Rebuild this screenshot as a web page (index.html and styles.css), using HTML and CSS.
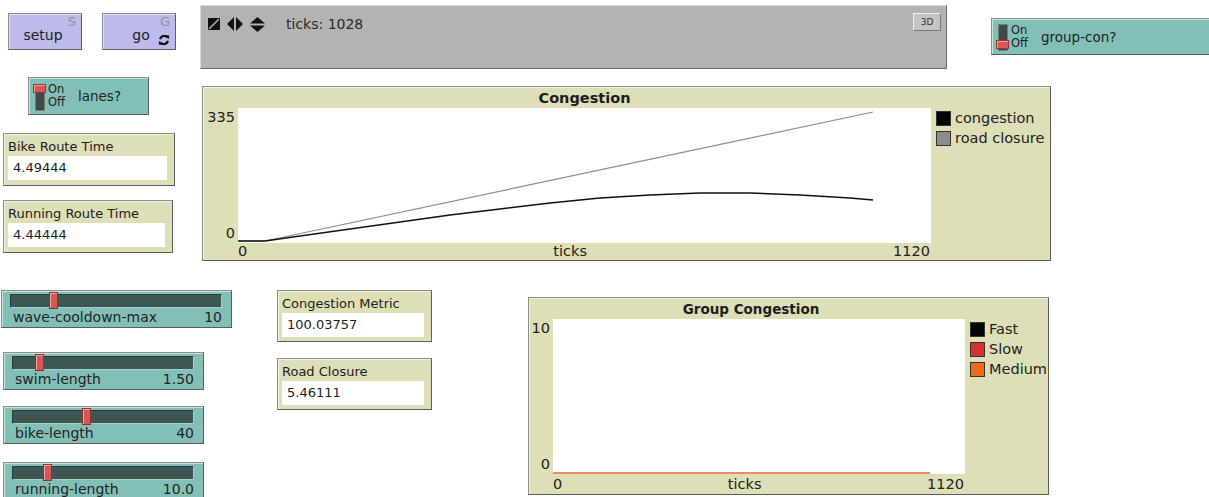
FILE: index.html
```html
<!DOCTYPE html>
<html lang="en">
<head>
<meta charset="utf-8">
<title>Interface</title>
<link rel="stylesheet" href="styles.css">
</head>
<body>
<main class="interface">

  <button class="widget nl-button btn-setup">
    <span class="btn-label">setup</span>
    <span class="hotkey">S</span>
  </button>

  <button class="widget nl-button btn-go">
    <span class="btn-label">go</span>
    <span class="hotkey">G</span>
    <svg class="forever" viewBox="0 0 12 12" width="12" height="12" aria-hidden="true">
      <path d="M2.2 5.2 A4 4 0 0 1 9.4 3.6" fill="none" stroke="#111" stroke-width="2.2"/>
      <path d="M7.6 1.2 L11.4 1.4 L10.6 5.2 Z" fill="#111"/>
      <path d="M9.8 6.8 A4 4 0 0 1 2.6 8.4" fill="none" stroke="#111" stroke-width="2.2"/>
      <path d="M4.4 10.8 L0.6 10.6 L1.4 6.8 Z" fill="#111"/>
    </svg>
  </button>

  <section class="widget view">
    <div class="view-bar">
      <svg class="view-icon" viewBox="0 0 12 12" width="12" height="12" aria-hidden="true">
        <rect x="0" y="0" width="12" height="12" fill="#111"/>
        <path d="M11 1 L1 11" stroke="#b3b3b3" stroke-width="1.4"/>
      </svg>
      <svg class="view-icon" viewBox="0 0 16 14" width="16" height="14" aria-hidden="true">
        <path d="M7 0 L0 7 L7 14 Z" fill="#111"/>
        <path d="M9 0 L16 7 L9 14 Z" fill="#111"/>
      </svg>
      <svg class="view-icon" viewBox="0 0 15 15" width="15" height="15" aria-hidden="true">
        <path d="M7.5 0 L15 6.5 L0 6.5 Z" fill="#111"/>
        <path d="M0 8.5 L15 8.5 L7.5 15 Z" fill="#111"/>
      </svg>
      <span class="tick-count">ticks: 1028</span>
    </div>
    <button class="btn-3d">3D</button>
  </section>

  <div class="widget switch sw-group is-off">
    <span class="toggle"><span class="knob"></span></span>
    <span class="onoff"><span>On</span><span>Off</span></span>
    <span class="switch-label">group-con?</span>
  </div>

  <div class="widget switch sw-lanes is-on">
    <span class="toggle"><span class="knob"></span></span>
    <span class="onoff"><span>On</span><span>Off</span></span>
    <span class="switch-label">lanes?</span>
  </div>

  <div class="widget monitor mon-bike">
    <span class="monitor-label">Bike Route Time</span>
    <span class="monitor-value">4.49444</span>
  </div>

  <div class="widget monitor mon-run">
    <span class="monitor-label">Running Route Time</span>
    <span class="monitor-value">4.44444</span>
  </div>

  <section class="widget plot plot-cong">
    <h2 class="plot-title">Congestion</h2>
    <div class="y-axis"><span>335</span><span>0</span></div>
    <div class="plot-area">
      <svg class="pens" viewBox="0 0 693 135" preserveAspectRatio="none" aria-hidden="true">
        <polyline fill="none" stroke="#8d8d8d" stroke-width="1.2"
          points="0,133 27,133 635,4"/>
        <polyline fill="none" stroke="#111" stroke-width="1.5"
          points="0,133 27,133 62,128 112,121 162,114 212,107 262,101 312,95 362,90 412,87 462,85 512,85 562,87 612,90 635,92"/>
      </svg>
    </div>
    <ul class="legend">
      <li><span class="swatch sw-black"></span>congestion</li>
      <li><span class="swatch sw-gray"></span>road closure</li>
    </ul>
    <div class="x-axis"><span>0</span><span class="x-name">ticks</span><span>1120</span></div>
  </section>

  <div class="widget slider sl-wave">
    <div class="track"><span class="handle" style="left: 38px"></span></div>
    <div class="slider-text"><span>wave-cooldown-max</span><span>10</span></div>
  </div>

  <div class="widget slider sl-swim">
    <div class="track"><span class="handle" style="left: 22px"></span></div>
    <div class="slider-text"><span>swim-length</span><span>1.50</span></div>
  </div>

  <div class="widget slider sl-bike">
    <div class="track"><span class="handle" style="left: 69px"></span></div>
    <div class="slider-text"><span>bike-length</span><span>40</span></div>
  </div>

  <div class="widget slider sl-run">
    <div class="track"><span class="handle" style="left: 30px"></span></div>
    <div class="slider-text"><span>running-length</span><span>10.0</span></div>
  </div>

  <div class="widget monitor mon-cong">
    <span class="monitor-label">Congestion Metric</span>
    <span class="monitor-value">100.03757</span>
  </div>

  <div class="widget monitor mon-road">
    <span class="monitor-label">Road Closure</span>
    <span class="monitor-value">5.46111</span>
  </div>

  <section class="widget plot plot-group">
    <h2 class="plot-title">Group Congestion</h2>
    <div class="y-axis"><span>10</span><span>0</span></div>
    <div class="plot-area">
      <svg class="pens" viewBox="0 0 412 155" preserveAspectRatio="none" aria-hidden="true">
        <polyline fill="none" stroke="#e8653a" stroke-width="1.6" points="0,154 377,154"/>
      </svg>
    </div>
    <ul class="legend">
      <li><span class="swatch sw-black"></span>Fast</li>
      <li><span class="swatch sw-red"></span>Slow</li>
      <li><span class="swatch sw-orange"></span>Medium</li>
    </ul>
    <div class="x-axis"><span>0</span><span class="x-name">ticks</span><span>1120</span></div>
  </section>

</main>
</body>
</html>
```

FILE: styles.css
```css
* { box-sizing: border-box; }

html, body {
  margin: 0;
  padding: 0;
  background: #ffffff;
  overflow: hidden;
}

body {
  font-family: "DejaVu Sans", "Liberation Sans", sans-serif;
  color: #1d1d1d;
}

/* The interface tab is a free canvas: every widget keeps the spot the model author gave it. */
.interface {
  position: relative;
  width: 1209px;
  height: 497px;
  overflow: hidden;
}

.widget {
  position: absolute;
  border: 1px solid #8c8c8c;
  border-right-color: #5d5d5d;
  border-bottom-color: #5d5d5d;
  box-shadow: inset 1px 1px 0 rgba(255, 255, 255, 0.55);
}

/* ---------- buttons ---------- */
.nl-button {
  background: #bcbbe9;
  font: inherit;
  color: #1d1d1d;
  padding: 0;
  margin: 0;
  display: flex;
  align-items: center;
  justify-content: center;
  cursor: pointer;
}

.btn-label {
  font-size: 14px;
  padding-top: 6px;
}

.hotkey {
  position: absolute;
  top: 0;
  right: 5px;
  font-size: 13px;
  color: #8e8eb0;
}

.btn-setup { left: 8px; top: 13px; width: 74px; height: 37px; }
.btn-setup .btn-label { margin-left: -4px; }

.btn-go { left: 102px; top: 13px; width: 74px; height: 37px; }
.btn-go .btn-label { margin-left: 4px; }

.forever {
  position: absolute;
  right: 5px;
  bottom: 3px;
}

/* ---------- world view ---------- */
.view {
  left: 200px;
  top: 5px;
  width: 747px;
  height: 64px;
  background: #b3b3b3;
  border-color: #d8d8d8 #6a6a6a #6a6a6a #d8d8d8;
  box-shadow: none;
}

.view-bar {
  display: flex;
  align-items: center;
  gap: 7px;
  padding: 10px 0 0 7px;
}

.view-icon { display: block; }

.tick-count {
  font-size: 14px;
  margin-left: 14px;
  color: #2a2a2a;
}

.btn-3d {
  position: absolute;
  top: 7px;
  right: 5px;
  width: 28px;
  height: 18px;
  padding: 0;
  font-family: "DejaVu Sans", sans-serif;
  font-size: 9px;
  color: #333;
  background: #c4c4c4;
  border: 1px solid #8a8a8a;
  border-color: #f0f0f0 #7a7a7a #7a7a7a #f0f0f0;
}

/* ---------- switches ---------- */
.switch {
  background: #82c0b7;
  display: flex;
  align-items: center;
}

.sw-lanes { left: 28px; top: 77px; width: 121px; height: 38px; }
.sw-group { left: 991px; top: 18px; width: 230px; height: 37px; }

.toggle {
  position: relative;
  width: 13px;
  height: 25px;
  margin-left: 4px;
  display: flex;
  justify-content: center;
}

.toggle::before {
  content: "";
  width: 8px;
  height: 100%;
  background: #3e4a48;
  border: 1px solid #6f7f7c;
}

.knob {
  position: absolute;
  left: 0;
  width: 13px;
  height: 9px;
  background: #d65856;
  border: 1px solid #9a3634;
  box-shadow: inset 1px 1px 0 #f39a98;
}

.is-on .knob { top: 0; }
.is-off .knob { bottom: 0; }

.onoff {
  display: flex;
  flex-direction: column;
  font-size: 11.5px;
  line-height: 13px;
  margin-left: 2px;
  color: #222;
}

.switch-label {
  font-size: 13.5px;
  margin-left: 13px;
  color: #222;
}

/* ---------- monitors ---------- */
.monitor {
  background: #dedeb7;
  display: flex;
  flex-direction: column;
  padding: 5px 7px 5px 4px;
  gap: 2px;
}

.monitor-label {
  font-size: 13px;
  line-height: 15px;
}

.monitor-value {
  background: #ffffff;
  font-size: 13px;
  line-height: 24px;
  height: 24px;
  padding-left: 5px;
}

.mon-bike { left: 3px; top: 133px; width: 172px; height: 53px; }
.mon-run  { left: 3px; top: 200px; width: 170px; height: 53px; }
.mon-cong { left: 277px; top: 290px; width: 155px; height: 52px; }
.mon-road { left: 277px; top: 358px; width: 155px; height: 52px; }

/* ---------- sliders ---------- */
.slider {
  background: #82c0b7;
  padding: 3px 9px 0 8px;
  display: flex;
  flex-direction: column;
}

.track {
  position: relative;
  height: 14px;
  background: #3f5754;
  border: 1px solid #2c3c3a;
  border-bottom-color: #a6d1ca;
  border-right-color: #a6d1ca;
}

.handle {
  position: absolute;
  top: -3px;
  width: 9px;
  height: 17px;
  background: #d65856;
  border: 1px solid #8e3331;
  box-shadow: inset 1px 1px 0 #f2a3a1;
}

.slider-text {
  display: flex;
  justify-content: space-between;
  font-size: 14px;
  line-height: 16px;
  padding: 1px 0 0 3px;
  color: #222;
}

.sl-wave { left: 1px; top: 290px; width: 231px; height: 38px; }
.sl-swim { left: 3px; top: 352px; width: 201px; height: 38px; }
.sl-bike { left: 3px; top: 406px; width: 201px; height: 38px; }
.sl-run  { left: 3px; top: 462px; width: 201px; height: 38px; }

/* ---------- plots ---------- */
.plot {
  background: #dedeb7;
  display: grid;
  font-size: 14.5px;
  color: #222;
}

.plot-title {
  grid-column: 2;
  margin: 0;
  font-size: 14.5px;
  font-weight: bold;
  text-align: center;
  align-self: center;
  color: #1d1d1d;
}

.y-axis {
  grid-column: 1;
  grid-row: 2;
  display: flex;
  flex-direction: column;
  justify-content: space-between;
  align-items: flex-end;
  padding: 1px 3px 2px 0;
  line-height: 16px;
}

.plot-area {
  grid-column: 2;
  grid-row: 2;
  background: #ffffff;
  position: relative;
}

.pens {
  display: block;
  width: 100%;
  height: 100%;
}

.legend {
  grid-column: 3;
  grid-row: 2 / span 2;
  list-style: none;
  margin: 0;
  padding: 0 0 0 5px;
  line-height: 20px;
}

.legend li {
  display: flex;
  align-items: center;
  gap: 4px;
  white-space: nowrap;
}

.swatch {
  width: 15px;
  height: 15px;
  border: 1px solid #333;
}

.sw-black  { background: #050505; }
.sw-gray   { background: #8d8d8d; }
.sw-red    { background: #d73229; }
.sw-orange { background: #f1691c; }

.x-axis {
  grid-column: 1 / span 2;
  grid-row: 3;
  display: flex;
  align-items: center;
  line-height: 17px;
}

.x-name {
  flex: 1;
  text-align: center;
}

.plot-cong {
  left: 202px;
  top: 86px;
  width: 849px;
  height: 175px;
  grid-template-columns: 35px 693px 1fr;
  grid-template-rows: 21px 135px 1fr;
}

.plot-cong .x-axis { padding: 0 1px 0 35px; }

.plot-group {
  left: 528px;
  top: 297px;
  width: 521px;
  height: 198px;
  grid-template-columns: 24px 412px 1fr;
  grid-template-rows: 21px 155px 1fr;
}

.plot-group .x-axis { padding: 0 1px 0 24px; }
.plot-group .plot-title { font-size: 13.5px; transform: translateX(-8px); }
```
